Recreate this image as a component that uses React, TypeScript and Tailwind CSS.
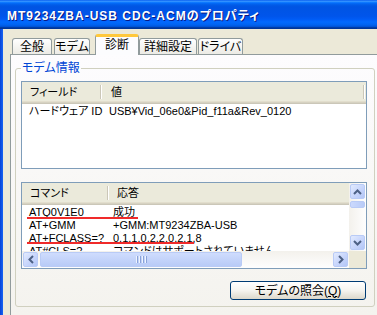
import React from 'react';

const ArrowUp = () => (
  <svg width="9" height="6" viewBox="0 0 9 6">
    <polyline points="1,5 4.5,1.5 8,5" fill="none" stroke="#4d6185" strokeWidth="2" />
  </svg>
);
const ArrowDown = () => (
  <svg width="9" height="6" viewBox="0 0 9 6">
    <polyline points="1,1 4.5,4.5 8,1" fill="none" stroke="#4d6185" strokeWidth="2" />
  </svg>
);
const ArrowLeft = () => (
  <svg width="6" height="9" viewBox="0 0 6 9">
    <polyline points="5,1 1.5,4.5 5,8" fill="none" stroke="#4d6185" strokeWidth="2" />
  </svg>
);
const ArrowRight = () => (
  <svg width="6" height="9" viewBox="0 0 6 9">
    <polyline points="1,1 4.5,4.5 1,8" fill="none" stroke="#4d6185" strokeWidth="2" />
  </svg>
);

const ScrollButton: React.FC<{ children: React.ReactNode }> = ({ children }) => (
  <div className="w-[17px] h-[17px] p-px">
    <div className="w-full h-full rounded-[2px] border border-[#b9cbf6] bg-gradient-to-br from-[#e3ebfe] via-[#c9d7fc] to-[#b3c6f6] flex items-center justify-center">
      {children}
    </div>
  </div>
);

const Divider = () => <div className="w-px h-[14px] bg-[#cbc7b8] shadow-[1px_0_#ffffff]" />;

const headerCls =
  'flex h-[22px] bg-[#ebeadb] shadow-[inset_0_-1px_#cbc7b8,inset_0_-2px_#d6d2c2,inset_0_-3px_#e2decd] shrink-0';

type Tab = { label: string; cls: string; active?: boolean };

const tabs: Tab[] = [
  { label: '全般', cls: 'ml-[2px] w-[40px]' },
  { label: 'モデム', cls: 'ml-[2px] w-[36px]' },
  { label: '診断', cls: 'ml-[5px] w-[44px]', active: true },
  { label: '詳細設定', cls: 'w-[58px]' },
  { label: 'ドライバ', cls: 'ml-[1px] w-[45px]' },
];

const rows = [
  { cmd: 'ATQ0V1E0', resp: '成功', mark: 'top-[11px] w-[111px]' },
  { cmd: 'AT+GMM', resp: '+GMM:MT9234ZBA-USB' },
  { cmd: 'AT+FCLASS=?', resp: '0,1,1.0,2,2.0,2.1,8', mark: 'top-[10px] w-[167px]' },
  { cmd: 'AT#CLS=?', resp: 'コマンドはサポートされていません' },
];

const App: React.FC = () => {
  return (
    <div className="w-[377px] h-[315px] overflow-hidden bg-[#ece9d8] flex flex-col font-['Liberation_Sans','Noto_Sans_CJK_JP',sans-serif] text-[11px] text-black [font-feature-settings:'palt']">
      {/* title bar */}
      <div className="h-[29px] shrink-0 flex items-center pl-[7px] pt-[3px] bg-[linear-gradient(to_bottom,#0058ee_0%,#3a93ff_4%,#288eff_6%,#127dff_8%,#036ffc_10%,#0262ee_14%,#0057e5_20%,#0054e3_24%,#0055eb_56%,#005bf5_66%,#026afe_76%,#0062ef_86%,#0052d6_92%,#0040ab_94%,#003092_100%)]">
        <span className="text-white font-bold text-[12px] tracking-[1px] whitespace-nowrap [text-shadow:1px_1px_#0a1883]">
          MT9234ZBA-USB CDC-ACMのプロパティ
        </span>
      </div>

      <div className="flex flex-1 min-h-0">
        <div className="w-[3px] shrink-0 bg-gradient-to-r from-[#0842d6] to-[#1764f4]" />
        <div className="flex-1 pl-[7px] flex flex-col min-w-0">
          {/* tabs */}
          <div className="h-[25px] shrink-0 flex items-end relative z-10">
            {tabs.map((t) =>
              t.active ? (
                <div
                  key={t.label}
                  className={`${t.cls} h-[21px] -mb-px shrink-0 rounded-t-[3px] border-x border-[#919b9c] border-t-[3px] border-t-[#ffc83c] bg-[#fcfcfe] flex items-center justify-center text-[12px] pb-[2px]`}
                >
                  {t.label}
                </div>
              ) : (
                <div
                  key={t.label}
                  className={`${t.cls} h-[16px] shrink-0 rounded-t-[3px] border-x border-t border-[#919b9c] bg-gradient-to-b from-[#ffffff] to-[#ecebe5] flex items-center justify-center text-[12px]`}
                >
                  {t.label}
                </div>
              )
            )}
          </div>

          {/* tab panel */}
          <div className="flex-1 w-[400px] border-l border-t border-[#919b9c] bg-gradient-to-b from-[#fdfcfe] to-[#f4f3ee] pl-[4px] pt-[6px]">
            <fieldset className="w-[360px] border border-[#d0d0bf] rounded-[3px] pl-[5px] pr-[7px] pb-[6px]">
              <legend className="ml-0 px-[1px] text-[12px] leading-[14px] text-[#0046d5]">モデム情報</legend>

              {/* list 1 */}
              <div className="mt-[6px] h-[88px] border border-[#7f9db9] bg-white flex flex-col">
                <div className={headerCls}>
                  <div className="w-[79px] pl-[8px] flex items-center justify-between pb-[2px]">
                    <span>フィールド</span>
                    <Divider />
                  </div>
                  <div className="w-[263px] pl-[10px] flex items-center justify-between pb-[2px]">
                    <span>値</span>
                    <Divider />
                  </div>
                </div>
                <div className="flex h-[13px] leading-[13px] mt-[1px] whitespace-nowrap">
                  <div className="w-[79px] pl-[7px]">ハードウェア ID</div>
                  <div className="pl-[8px]">USB¥Vid_06e0&amp;Pid_f11a&amp;Rev_0120</div>
                </div>
              </div>

              {/* list 2 */}
              <div className="mt-[13px] h-[87px] border border-[#7f9db9] bg-white flex flex-col">
                <div className="flex flex-1 min-h-0">
                  <div className="flex-1 flex flex-col min-w-0">
                    <div className={headerCls}>
                      <div className="w-[86px] pl-[8px] flex items-center justify-between pb-[2px]">
                        <span>コマンド</span>
                        <Divider />
                      </div>
                      <div className="flex-1 pl-[9px] flex items-center pb-[2px]">
                        <span>応答</span>
                      </div>
                    </div>
                    <div className="flex-1 min-h-0 overflow-hidden pt-[1px]">
                      {rows.map((r) => (
                        <div key={r.cmd} className="relative flex h-[13px] leading-[13px] whitespace-nowrap">
                          <div className="w-[86px] pl-[7px] shrink-0">{r.cmd}</div>
                          <div className="pl-[5px]">{r.resp}</div>
                          {r.mark && (
                            <div className={`absolute left-[5px] h-[2px] bg-[#f02a2a] ${r.mark}`} />
                          )}
                        </div>
                      ))}
                    </div>
                  </div>
                  {/* vertical scrollbar */}
                  <div className="w-[17px] shrink-0 flex flex-col bg-gradient-to-r from-[#f3f1ec] to-[#fefefe]">
                    <ScrollButton>
                      <ArrowUp />
                    </ScrollButton>
                    <div className="mx-px mt-px h-[7px] rounded-[2px] border border-[#b9cbf6] bg-gradient-to-r from-[#cbd9fd] to-[#b8cbf7]" />
                    <div className="flex-1" />
                    <ScrollButton>
                      <ArrowDown />
                    </ScrollButton>
                  </div>
                </div>
                {/* horizontal scrollbar */}
                <div className="h-[17px] shrink-0 flex">
                  <div className="flex-1 flex bg-gradient-to-b from-[#f3f1ec] to-[#fefefe]">
                    <ScrollButton>
                      <ArrowLeft />
                    </ScrollButton>
                    <div className="ml-px my-px w-[202px] rounded-[2px] border border-[#b9cbf6] bg-gradient-to-b from-[#cfdcfd] to-[#b8cbf7] flex items-center justify-center gap-[1px]">
                      <div className="w-px h-[7px] bg-[#eef4fe] shadow-[1px_0_#8aa3d9]" />
                      <div className="w-px h-[7px] bg-[#eef4fe] shadow-[1px_0_#8aa3d9] ml-px" />
                      <div className="w-px h-[7px] bg-[#eef4fe] shadow-[1px_0_#8aa3d9] ml-px" />
                      <div className="w-px h-[7px] bg-[#eef4fe] shadow-[1px_0_#8aa3d9] ml-px" />
                    </div>
                    <div className="flex-1" />
                    <ScrollButton>
                      <ArrowRight />
                    </ScrollButton>
                  </div>
                  <div className="w-[17px] bg-[#ece9d8]" />
                </div>
              </div>

              {/* button */}
              <div className="mt-[12px] flex justify-end">
                <button className="mr-px w-[136px] h-[19px] rounded-[3px] border border-[#003c74] bg-gradient-to-b from-[#ffffff] via-[#f5f4ef] to-[#dcd8cb] text-[12px] leading-none flex items-center justify-center">
                  モデムの照会(<span className="underline">Q</span>)
                </button>
              </div>
            </fieldset>
          </div>
        </div>
      </div>
    </div>
  );
};

export default App;
